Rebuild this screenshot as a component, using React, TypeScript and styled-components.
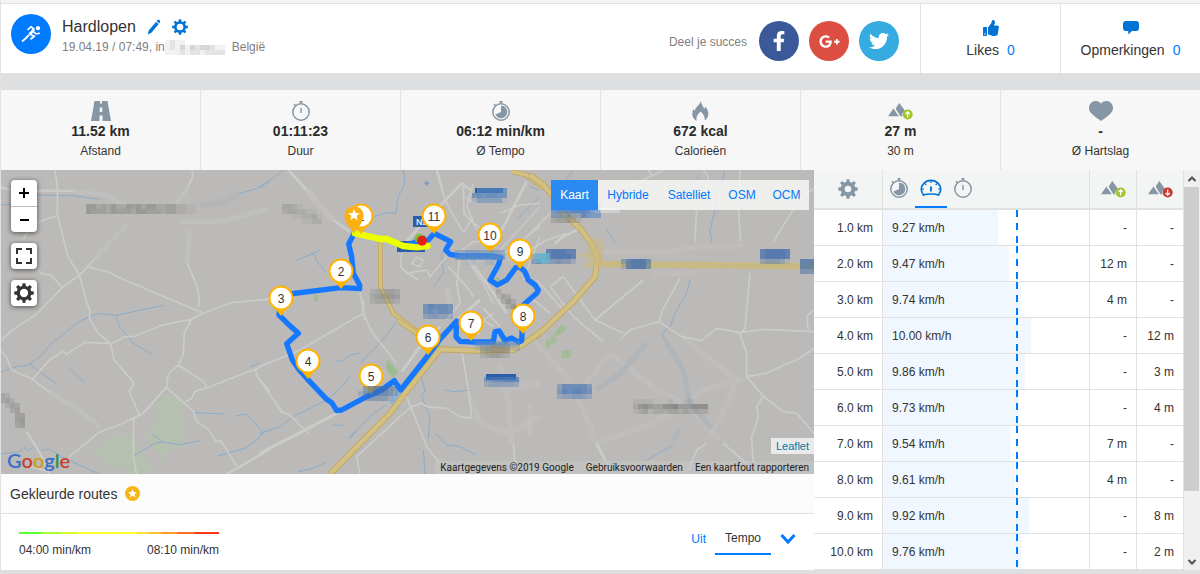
import React from "react";
import styled, { createGlobalStyle, css } from "styled-components";
import { FaFacebookF, FaGooglePlusG, FaTwitter, FaThumbsUp } from "react-icons/fa";

const c = {
  blue: "#007aff",
  link: "#0073d5",
  text: "#333",
  muted: "#808080",
  icon: "#8796a5",
  line: "#e1e1e1",
  page: "#dedfe1",
  soft: "#f3f5f4",
};

const Global = createGlobalStyle`
  *, *::before, *::after { box-sizing: border-box; }
  body {
    margin: 0;
    background: ${c.page};
    color: ${c.text};
    font: 12px/20px "Liberation Sans", Arial, sans-serif;
  }
  button { font: inherit; color: inherit; background: none; border: 0; padding: 0; cursor: pointer; }
  a { color: inherit; text-decoration: none; }
  svg { display: block; flex: none; }
`;

/* ---------- page frame ---------- */

const Page = styled.div`
  border-left: 1px solid ${c.line};
`;

const TopStrip = styled.div`
  height: 4px;
  background: ${c.soft};
  border-bottom: 1px solid ${c.line};
`;

const Header = styled.header`
  display: flex;
  min-height: 69px;
  margin-bottom: 17px;
  background: #fff;
`;

const Identity = styled.div`
  display: flex;
  flex: 1;
  gap: 11px;
  padding: 10px;
`;

const SportBadge = styled.span`
  display: flex;
  width: 40px;
  height: 40px;
  border-radius: 50%;
  background: ${c.blue};
  align-items: center;
  justify-content: center;
`;

const TitleRow = styled.div`
  display: flex;
  align-items: center;
  gap: 11px;
  height: 25px;
`;

const Title = styled.h1`
  margin: 0;
  font-size: 16px;
  font-weight: 400;
`;

const IconButton = styled.button`
  display: flex;
  color: ${c.link};
`;

const SubTitle = styled.div`
  display: flex;
  align-items: center;
  line-height: 16px;
  color: ${c.muted};
`;

const Share = styled.div`
  display: flex;
  align-items: center;
  gap: 10px;
  padding: 5px 21px 0 0;
  color: ${c.muted};
`;

const ShareLabel = styled.span`
  padding: 2px 2px 0 0;
`;

const SocialLink = styled.a<{ $bg: string }>`
  display: flex;
  width: 40px;
  height: 40px;
  border-radius: 50%;
  background: ${(p) => p.$bg};
  color: #fff;
  align-items: center;
  justify-content: center;
`;

const Reaction = styled.button`
  display: flex;
  flex-direction: column;
  align-items: center;
  gap: 3px;
  width: 140px;
  padding-top: 16px;
  border-left: 1px solid ${c.line};
  font-size: 14px;

  svg { color: ${c.link}; }
`;

const ReactionText = styled.span`
  display: flex;
  gap: 8px;
  line-height: 22px;
`;

const Count = styled.span`
  color: ${c.blue};
`;

/* ---------- summary ---------- */

const Stats = styled.section`
  display: grid;
  grid-template-columns: repeat(6, 1fr);
  margin-left: -1px;
  background: #f7f7f7;
`;

const Stat = styled.div`
  display: flex;
  flex-direction: column;
  align-items: center;
  height: 80px;
  padding-top: 11px;
  border-left: 1px solid ${c.line};
`;

const StatValue = styled.strong`
  font-size: 14px;
  color: #2b2b2b;
`;

const StatIcon = styled.span`
  height: 20px;
  color: ${c.icon};
`;

/* ---------- map ---------- */

const Main = styled.main`
  display: grid;
  grid-template-columns: minmax(0, 813fr) minmax(0, 386fr);
  background: #fff;
`;

const MapColumn = styled.section`
  display: flex;
  flex-direction: column;
`;

const MapBox = styled.div`
  position: relative;
  height: 304px;
  overflow: hidden;
  background: #bbbab8;
`;

const MapTools = styled.div`
  position: absolute;
  top: 10px;
  left: 10px;
  display: flex;
  flex-direction: column;
  gap: 11px;
`;

const ToolGroup = styled.div`
  border-radius: 4px;
  background: #fff;
  box-shadow: 0 1px 5px rgba(0, 0, 0, 0.6);
`;

const Tool = styled.button`
  display: flex;
  width: 26px;
  height: 26px;
  align-items: center;
  justify-content: center;
  color: #000;

  & + & { border-top: 1px solid #bbb; }
`;

const IconTool = styled(Tool)`
  color: #333;
`;

const LayerPicker = styled.div`
  position: absolute;
  top: 10px;
  right: 5px;
  display: grid;
  grid-template-columns: 47px 60px 62px 44px 45px;
  height: 30px;
  background: rgba(255, 255, 255, 0.75);
`;

const Layer = styled.button<{ $on?: boolean }>`
  color: ${c.blue};
  ${(p) =>
    p.$on &&
    css`
      background: rgba(0, 116, 242, 0.82);
      color: #fff;
    `}
`;

const LeafletCredit = styled.a`
  position: absolute;
  right: 0;
  bottom: 20px;
  padding: 0 5px;
  font-size: 11px;
  line-height: 16px;
  color: #0078a8;
  background: rgba(255, 255, 255, 0.7);
`;

const GoogleCredit = styled.div`
  position: absolute;
  right: 0;
  bottom: 0;
  display: flex;
  gap: 12px;
  padding: 0 5px;
  font: 400 10px/13px Roboto, sans-serif;
  color: #222;
  background: rgba(200, 200, 198, 0.5);
`;

const GoogleLogo = styled.div`
  position: absolute;
  left: 6px;
  bottom: 0;
  font: 600 20px/28px Lato, sans-serif;
`;

const Tint = styled.span<{ $c: string }>`
  color: ${(p) => p.$c};
`;

/* ---------- coloured routes ---------- */

const RoutesTitle = styled.h2`
  display: flex;
  align-items: center;
  gap: 8px;
  height: 40px;
  margin: 0;
  padding: 0 9px;
  border-bottom: 1px solid ${c.line};
  background: #fcfcfc;
  font-size: 14px;
  font-weight: 400;
`;

const RoutesBody = styled.div`
  display: flex;
  justify-content: space-between;
  align-items: flex-start;
  height: 56px;
  padding: 0 18px;
`;

const Legend = styled.div`
  width: 200px;
  padding-top: 18px;
`;

const LegendBar = styled.div`
  height: 2px;
  margin-bottom: 6px;
  background: linear-gradient(
    to right,
    #5bff33 0 11%, #a6ff33 11% 21%, #d9fa33 21% 29%, #ffff2e 29% 59%, #ffe13a 59% 65%,
    #fbc02d 65% 71%, #fb9a2b 71% 79%, #fa6f22 79% 88%, #f93a1a 88%
  );
`;

const LegendLabels = styled.div`
  display: flex;
  justify-content: space-between;
`;

const Modes = styled.div`
  display: flex;
  align-items: center;
  gap: 9px;
  padding-top: 8px;
`;

const Mode = styled.button<{ $on?: boolean }>`
  height: 33px;
  color: ${c.blue};
  ${(p) =>
    p.$on &&
    css`
      padding: 0 10px;
      color: ${c.text};
      border-bottom: 2px solid ${c.blue};
    `}
`;

const MoreModes = styled(IconButton)`
  color: ${c.blue};
`;

/* ---------- split table ---------- */

const SplitPanel = styled.section`
  display: flex;
  height: 400px;
  overflow: hidden;
`;

const SplitTable = styled.table`
  flex: 1;
  align-self: flex-start;
  table-layout: fixed;
  border-collapse: separate;
  border-spacing: 0;
`;

const HeadCell = styled.th<{ $w?: number }>`
  ${(p) => p.$w && `width: ${p.$w}px;`}
  height: 40px;
  padding: 0;
  background: ${c.soft};
  border-right: 1px solid ${c.line};
  border-bottom: 2px solid ${c.line};

  & > button, & > svg { margin: 0 auto; color: ${c.icon}; }
`;

const Tabs = styled.div`
  display: flex;
  height: 38px;
`;

const Tab = styled.button<{ $on?: boolean }>`
  display: flex;
  width: 32px;
  align-items: center;
  justify-content: center;
  border-bottom: 2px solid ${(p) => (p.$on ? c.blue : "transparent")};
  color: ${(p) => (p.$on ? c.blue : c.icon)};
`;

const Cell = styled.td`
  height: 36px;
  padding: 0 9px 0 0;
  text-align: right;
  border-right: 1px solid ${c.line};
  border-bottom: 1px solid ${c.line};
`;

const SpeedCell = styled(Cell)<{ $bar: number }>`
  padding: 0 0 0 9px;
  text-align: left;
  background:
    repeating-linear-gradient(to bottom, ${c.blue} 0 7px, transparent 7px 13px) 65% 0 / 2px 100% no-repeat,
    linear-gradient(#f0f7ff, #f0f7ff) 0 0 / ${(p) => p.$bar}% 100% no-repeat;
`;

const ScrollTrack = styled.div`
  display: flex;
  flex-direction: column;
  width: 16px;
  background: #f0f0f0;
  color: #505050;
`;

const ScrollArrow = styled.button`
  display: flex;
  height: 17px;
  align-items: center;
  justify-content: center;
`;

const ScrollLane = styled.div`
  flex: 1;
`;

const ScrollThumb = styled.div`
  height: 83%;
  margin-right: 1px;
  background: #cdcdcd;
`;

/* ---------- icons ---------- */

function Gear({ size, hole = 5 }: { size: number; hole?: number }) {
  return (
    <svg width={size} height={size} viewBox="0 0 24 24" fill="currentColor">
      <circle cx="12" cy="12" r={(8.8 + hole) / 2} fill="none" stroke="currentColor" strokeWidth={8.8 - hole} />
      {[0, 45, 90, 135, 180, 225, 270, 315].map((a) => (
        <path key={a} d="M9.7 4.5 10.3.3h3.4l.6 4.2z" transform={`rotate(${a} 12 12)`} />
      ))}
    </svg>
  );
}

function Watch({ kind }: { kind: "plain" | "filled" }) {
  return (
    <svg width="20" height="20" viewBox="0 0 20 20" fill="none" stroke="currentColor">
      <circle cx="10" cy="11" r="8.2" strokeWidth="1.5" />
      <path d="M8.5.8h3M10 1v2" strokeWidth="1.6" />
      <path d="M2.800 3.800 4.600 4.400M3.200 2.800l1.400 1.800" strokeWidth="1.2" />
      {kind === "plain" ? (
        <path d="M10 7v5" strokeWidth="1.4" />
      ) : (
        <path d="M10 4.8a6.2 6.2 0 1 1-5.6 8.8L10 11z" fill="currentColor" stroke="none" />
      )}
    </svg>
  );
}

function Speedometer() {
  return (
    <svg width="22" height="18" viewBox="0 0 22 18" fill="none" stroke={c.link} strokeWidth="1.7">
      <path
        d="M3.6 16.2C.4 12.4.7 7.6 3.6 4.6 7.6.3 14.4.3 18.4 4.6 21.3 7.6 21.6 12.4 18.4 16.2 16 14.6 6 14.6 3.6 16.2z"
        strokeLinejoin="round"
      />
      <path d="M11 7.5v5" strokeWidth="1.9" />
      <path d="M11 2v2M5 4.6 6.3 6M17 4.6 15.7 6M2 10h2M18 10h2" strokeWidth="1.2" />
    </svg>
  );
}

function Hills({ down }: { down?: boolean }) {
  return (
    <svg width="25" height="20" viewBox="0 0 25 20">
      <path d="M11.3 2 16.8 9.6 14.4 12.5 14.2 15.2H12.4L7.6 7.6z" fill={c.icon} />
      <path d="M5.4 7.4 10.8 15.2H0z" fill={c.icon} />
      <circle cx="19.7" cy="13.5" r="5" fill={down ? "#c93732" : "#a3c62c"} />
      <path
        d={down ? "M19.7 10.5V16M17.5 14l2.2 2.2 2.2-2.2" : "M19.7 16.5V11M17.5 13l2.2-2.2 2.2 2.2"}
        fill="none"
        stroke="#fff"
        strokeWidth="1.2"
      />
    </svg>
  );
}

const starPath = "M0-6 1.600-2 6-1.800 2.600 1 3.800 5.200 0 2.800-3.800 5.200-2.600 1-6-1.800-1.600-2z";

const Runner = () => (
  <svg width="20" height="18" viewBox="0 0 20 18" fill="none" stroke="#fff" strokeWidth="1.800">
    <circle cx="17" cy="3.2" r="2.1" fill="#fff" stroke="none" />
    <path d="M6.5 4.8 10 1.800 13.500 4.500M12.500 6.800l2.500 2 4-.6" strokeWidth="1.6" />
    <path d="M13 4.500 8.500 9.400" strokeWidth="2.800" />
    <path d="M8.500 9 13.200 11.300 9.500 14.200M8 10 4.500 13.500 1 16.500" />
  </svg>
);

const Pencil = () => (
  <svg width="14" height="16" viewBox="0 0 14 16" fill="currentColor">
    <path d="M10.600 1.100c1.100-1.100 3.200.4 2.500 1.800l-.9 1.300-2.600-2zM9 3l2.700 2-7.300 8.800L.8 15.500l.9-3.900z" />
  </svg>
);

const Road = () => (
  <svg width="20" height="20" viewBox="0 0 20 20" fill={c.icon}>
    <path d="M3.500 0H9v2.500h2V0h5.500L20 20h-8.500v-5.500h-3V20H0zM8.800 6.500v4.500h2.400V6.500z" fillRule="evenodd" />
  </svg>
);

const Flame = () => (
  <svg width="17" height="20" viewBox="0 0 17 20" fill={c.icon}>
    <path d="M8.8 0c.5 3.400 2.700 5.300 3.200 7.800.9-.3 1.300-1.200 1.300-2.200 3.600 4.300 4.700 10-.6 14 .5-3.300-1.100-6.600-4.200-9.200-3 2.500-4.700 6-3.900 9.500C-.3 17-.6 11.800 1.500 8c.3.900.8 1.500 1.500 1.700C3.200 5.600 8 4.200 8.800 0z" />
  </svg>
);

const Heart = () => (
  <svg width="24" height="20" viewBox="0 0 24 20" fill={c.icon}>
    <path d="M12 2.600C14.500-.8 19.500-.6 22 1.900c2.700 2.700 2.500 6.800.4 9.600C20 14.700 15.500 17.200 12 20 8.500 17.200 4 14.700 1.600 11.500-.5 8.700-.7 4.600 2 1.900 4.500-.6 9.500-.8 12 2.600z" />
  </svg>
);

const Bubble = () => (
  <svg width="16" height="16" viewBox="0 0 16 16" fill="currentColor">
    <path d="M3 1h10c2 0 3 1.200 3 3v4c0 1.900-1 3-3 3H9l-3.600 3.600L5.200 11H3c-2 0-3-1.100-3-3V4c0-1.800 1-3 3-3z" />
  </svg>
);

/* ---------- map drawing ---------- */

/* Blurred-out label: each digit is the strength of one square. */
function Mosaic({ x, y, color, rows, cell = 5 }: { x: number; y: number; color: string; rows: string[]; cell?: number }) {
  return (
    <g fill={color} shapeRendering="crispEdges">
      {rows.flatMap((row, r) =>
        row.split("").map((d, i) => (
          <rect key={`${r}-${i}`} x={x + i * cell} y={y + r * cell} width={cell} height={cell} opacity={Number(d) / 10} />
        ))
      )}
    </g>
  );
}

/* Map sheets are drawn at three units to the pixel from their own corner. */
const Sheet = ({ x, y, children }: { x: number; y: number; children: React.ReactNode }) => (
  <g transform={`translate(${x} ${y}) scale(0.33333)`}>{children}</g>
);

const Streets = ({ d, w = 5 }: { d: string; w?: number }) => <path d={d} stroke="#cbcbca" strokeWidth={w} />;
const Water = ({ d }: { d: string }) => <path d={d} stroke="#8aacca" strokeWidth={3} />;
const Highway = ({ d, w = 15 }: { d: string; w?: number }) => (
  <>
    <path d={d} stroke="#c2a55a" strokeWidth={w} />
    <path d={d} stroke="#d2c183" strokeWidth={w - 5} />
  </>
);

function Pin({ x, y, label }: { x: number; y: number; label: string }) {
  return (
    <g transform={`translate(${x} ${y})`}>
      <path d="M-8 8 0 18 8 8z" fill="#ffb400" />
      <circle r="11.500" fill="#fff" stroke="#ffb400" strokeWidth="2" />
      <text y="5" textAnchor="middle" fontSize="12" fill="#333" stroke="none">
        {label}
      </text>
    </g>
  );
}

const pins: [number, number, string][] = [
  [361, 216, "1"],
  [341, 271, "2"],
  [281, 298, "3"],
  [308, 361, "4"],
  [371, 376, "5"],
  [428, 337, "6"],
  [471, 323, "7"],
  [523, 316, "8"],
  [520, 251, "9"],
  [490, 235, "10"],
  [434, 216, "11"],
];

function MapDrawing() {
  return (
    <svg width="100%" height="100%" viewBox="1 170 813 304" preserveAspectRatio="xMidYMid slice" fill="none" strokeLinejoin="round">
      <rect x="-400" y="100" width="1700" height="450" fill="#bbbab8" />
      <Sheet x={0} y={170}>
        <path d="M500 668 548 696 542 720 551 752 545 828 498 850 500 870 488 880 432 790 455 780 475 745 460 715zM340 795 395 787 455 895 440 915 375 915 380 890 330 890 278 845z" fill="#b5c0b1" />
        <Water d="M0 105 60 103M110 75 220 77 300 88M0 606 50 590 85 586 120 560 160 514 180 502 232 457 268 440 300 430 347 436 492 406M347 436 358 470 400 520 460 555M88 582 170 642M205 590 255 640M583 728 670 732M708 738 740 732 790 788 770 810 735 835 652 858M810 780 790 788M398 860 465 820 490 816 540 824 602 812M490 816 455 792M0 852 60 845 70 832 85 842 100 832 115 842 150 838 180 858 297 912M750 590 778 580M810 30 770 55 720 70" />
        <Streets d="M165 0 172 50 172 135 204 260 238 315 258 390 271 425 268 445 295 490 332 522 341 568 400 636 400 645 387 663 418 735 401 745 400 860 410 915M172 137 125 152 90 170 70 210M115 300 125 312 150 314 188 352M285 265 240 315 190 350 110 432 35 482 0 515M268 291 330 308 355 322 610 430 693 398 810 387M610 430 575 447 482 467 405 499 375 500 334 521 255 517 200 553 188 545 150 568 97 628M575 447 553 488 550 552 535 585 505 612 499 652 440 718 420 735 350 768 300 785 205 862M535 585 610 634 621 653M810 575 765 598 621 653 585 664 575 685 556 696M499 652 580 724 590 755 625 778 648 815 662 812 710 888M575 0 580 15 565 50M562 280 592 350 598 392 594 412M765 598 775 625 810 665M0 540 18 560 35 600 97 628 150 668" />
        <Streets d="M0 52 30 58M110 62 220 63M80 785 120 850 150 915M675 915 810 838M90 890 150 905" w={7} />
        <g opacity="0.300">
          <Streets d="M220 63 320 75 380 110M380 165 285 265M150 668 230 715 300 770M570 180 560 280M540 155 660 155 810 115M565 50 530 100" w={14} />
          <path d="M720 70 660 100 600 105" stroke="#a3abb5" strokeWidth="20" />
        </g>
      </Sheet>
      <Sheet x={260} y={170}>
        <Water d="M70 0 0 55M430 0 435 40 415 80 408 130 380 128 340 140M110 270 160 250 175 280 200 310M160 250 180 240M570 210 545 250 550 310 520 350M840 80 770 150" />
        <path d="M500 32 508 40 500 48 492 40z" fill="#7f9fc4" />
        <Streets d="M530 0 555 90 585 145 610 185M610 40 612 130 635 155 700 200M640 40 620 110 650 180M840 100 780 105 720 130M425 250 422 290 440 310 500 300 510 320 560 260M430 300 475 330M455 280 470 262 490 270 480 290 455 280M600 262 590 340 600 400 560 450M565 290 620 350 640 380M300 365 310 420 315 450M0 390 60 387M700 215 640 215 600 245M840 170 800 200 730 250" />
        <Streets d="M85 0 140 60M220 150 270 185M530 0 545 50M630 60 605 40 470 180 430 225M800 35 715 200M610 245 680 340 740 430" w={8} />
        <Streets d="M840 110 720 240M620 262 660 330M640 140 610 190M610 80 650 100M630 260 700 400M840 200 790 330" w={4} />
        <g opacity="0.400">
          <Streets d="M140 60 170 95 220 150M560 350 570 400M640 265 840 265" w={18} />
        </g>
        <path d="M712 320 725 332 715 345 700 332zM165 375 175 375 172 395 162 390z" fill="#9dbb90" />
        <Highway d="M755 5 800 15 850 55" />
        <Highway d="M361 215 361 350 400 430 480 490" w={14} />
      </Sheet>
      <Sheet x={260} y={300}>
        <Water d="M0 400 60 380 100 350 140 330 200 300 235 270 275 225M225 185 250 180 270 165 300 160M300 190 340 150 375 110 410 65M220 375 255 376M290 390 265 415M485 235 495 270 485 290 510 350 505 415M525 400 560 435 600 440 645 463M555 270 580 275 630 270M115 515 160 505 200 485M270 415 320 360 340 340 380 315M490 450 495 522" />
        <Streets d="M0 200 120 150 310 40M310 0 310 40 335 95 410 190M0 240 65 335 90 345 130 385 150 405M455 318 290 470 300 522M440 290 500 440 540 490M455 320 485 310 500 320 560 325 600 350 635 355M605 150 630 300 635 355M760 430 765 490M640 80 700 40M655 105 670 60 700 80M670 25 720 80" />
        <Streets d="M0 460 240 335M425 215 480 140 540 80M590 60 660 0" w={9} />
        <g opacity="0.250">
          <Streets d="M630 290 660 370 750 400 840 350M720 190 745 300 755 430M840 250 720 270" w={18} />
        </g>
        <path d="M382 178 415 215 400 235 378 205z" fill="#9dbb90" />
        <path d="M420 275 395 312" stroke="#8fb2d0" strokeWidth="18" />
        <Highway d="M415 62 470 100 540 146" />
        <Highway d="M210 522 390 340 435 280 540 148 640 152 760 150 840 100" w={18} />
      </Sheet>
      <Sheet x={530} y={170}>
        <Water d="M585 0 575 40 555 60 558 110 540 180 545 215M480 330 470 370 440 420 420 470 395 490 405 510M230 180 255 215M0 50 25 60M130 0 100 40M495 20 505 28M430 825 350 870" />
        <Streets d="M400 0 300 50M355 0 365 15M520 0 535 20 525 60M500 120 495 215M630 0 625 115 632 215M850 55 805 95 730 215M450 325 395 425 388 455M340 330 195 450M660 310 645 475 630 492 650 550 650 620M388 455 360 462 300 480 270 510M388 455 455 500 515 512 560 475 630 488 700 478 860 485M100 320 60 350M100 320 195 450 280 490M60 350 130 440 220 515M860 530 800 570 750 590 710 610 650 620 700 678 760 725 800 730 860 800M700 678 680 710 685 740 665 800 670 890M850 420 830 440 835 480M0 190 60 130 150 90M0 240 50 210 110 190M0 380 60 430M20 330 100 420M200 820 240 900M530 820 500 840 475 900M580 820 650 880" />
        <Streets d="M75 220 100 200 150 175M200 820 225 870" w={8} />
        <g opacity="0.250">
          <Streets d="M0 500 110 620 160 720 200 820 330 775 440 720 520 660 640 625M240 550 380 660 480 710 570 810M455 500 620 630 590 700 540 800M160 650 240 550M0 700 0 800M220 245 420 245 500 230 640 230M370 310 500 310" w={16} />
          <path d="M350 520 270 610 200 660M405 510 460 600 480 700 545 775M450 780 430 810" stroke="#8fa8c0" strokeWidth="15" />
        </g>
        <path d="M95 462 110 480 80 500 72 490zM68 493 82 512 72 524 58 508zM48 508 64 514 60 535 46 535zM95 540 122 540 122 565 95 565z" fill="#9dbb90" opacity="0.800" />
        <Highway d="M0 15 40 45 70 80 100 130 150 175 185 220 203 265 195 320 130 395 40 480-30 530" w={18} />
        <path d="M203 282 860 289" stroke="#cbb97c" strokeWidth="20" opacity="0.900" />
      </Sheet>
      <g shapeRendering="crispEdges" fill="#2a5ea8">
        <rect x="413" y="216" width="22" height="11" />
        <rect x="397" y="241" width="28" height="11" />
        <rect x="475" y="188" width="28" height="5" />
        <rect x="486" y="374" width="30" height="6" />
      </g>
      <text x="416" y="225" fontSize="9" fontWeight="bold" fill="#dfe6ef">N2</text>

      <Sheet x={260} y={170}>
        <path
          d="M440 228 490 205M283 190 266 222 275 260 280 310 299 345 299 356 243 353 63 375 57 435 80 458 115 490 80 521 97 570 118 600 143 628 200 688 215 698 230 722 245 720 310 685 365 660 403 632 422 660 505 555 542 505 590 453 588 500 600 514 640 516 700 516 705 485 718 483 735 512 755 504 775 516 785 512 790 405 830 370 835 360 825 345 805 330 795 305 780 292 768 292 740 330 712 345 690 330 715 285 722 262 690 258 600 258 570 253 557 240 572 215 523 190 505 210"
          stroke="#1677ff"
          strokeWidth="16"
          strokeLinecap="round"
        />
        <path d="M285 190 330 200 361 207 380 207 430 228 470 232 503 228" stroke="#ecff00" strokeWidth="19" strokeLinecap="round" />
        <circle cx="478" cy="205" r="14" fill="#7ac231" />
        <circle cx="486" cy="212" r="15" fill="#e2211c" />
      </Sheet>

      {pins.map(([x, y, label]) => (
        <Pin key={label} x={x} y={y} label={label} />
      ))}
      <path d="M354 234c-1-5-9.500-9.500-9.500-18.500a9.500 9.500 0 0 1 19 0c0 9-8.500 13.500-9.500 18.500z" fill="#fab010" />
      <path d={starPath} fill="#fff" transform="translate(354 215)" />

      <Mosaic x={86} y={204} color="#777" rows={["5534353354535533442211", "5444354443554443442211"]} />
      <Mosaic x={282} y={204} color="#777" rows={["332100000", "233221100", "001122310", "000011220"]} />
      <Mosaic x={370} y={289} color="#777" rows={["233443", "345554", "233332"]} />
      <Mosaic x={472} y={188} color="#5684bd" rows={["0777777", "7878877", "2555551"]} />
      <Mosaic x={423} y={304} color="#4a78b5" rows={["687776", "676776", "455443"]} />
      <Mosaic x={455} y={250} color="#5f8cc0" rows={["4566655654", "6878787886", "0012002200"]} />
      <Mosaic x={531} y={249} color="#3f6cab" rows={["000788877", "333788887", "463445442"]} />
      <Mosaic x={535} y={253} color="#5fb6d3" rows={["677", "788"]} />
      <Mosaic x={621} y={259} color="#3f6cab" rows={["478886", "278885"]} />
      <Mosaic x={755} y={249} color="#3f6cab" rows={["0788887", "0788887", "0344431"]} />
      <Mosaic x={800} y={259} color="#3f6cab" rows={["7778", "7778", "5556"]} />
      <Mosaic x={551} y={203} color="#3f7cc8" rows={["000000045400", "677788877700", "444423765500"]} />
      <Mosaic x={551} y={213} color="#777" rows={["23343120000", "34454200000"]} />
      <Mosaic x={575} y={203} color="#d7dbe0" rows={["000000000", "000247776"]} />
      <Mosaic x={578} y={238} color="#cbb97c" rows={["00343", "00565", "00586", "45686", "00575", "04650"]} />
      <Mosaic x={358} y={386} color="#3f6cab" rows={["04677754", "25676653", "03444420"]} />
      <Mosaic x={480} y={343} color="#777" rows={["346664", "456665", "234432"]} />
      <Mosaic x={470} y={341} color="#5f8cc0" rows={["0555556665", "0223000223"]} />
      <Mosaic x={484} y={377} color="#4a78b5" rows={["5677887", "3444443"]} />
      <Mosaic x={557} y={384} color="#4a78b5" rows={["4777775", "5878876", "3445543"]} />
      <Mosaic x={633} y={399} color="#666" rows={["111100010011000", "245433556444555", "123122233232222"]} />
      <Mosaic x={0} y={393} color="#777" rows={["32000", "34200", "02430", "00340", "00044", "00045", "00034"]} />
      <Mosaic x={496} y={289} color="#666" rows={["2000", "1320", "0242", "0024"]} />
    </svg>
  );
}

/* ---------- data ---------- */

const stats = [
  { icon: <Road />, value: "11.52 km", label: "Afstand" },
  { icon: <Watch kind="plain" />, value: "01:11:23", label: "Duur" },
  { icon: <Watch kind="filled" />, value: "06:12 min/km", label: "Ø Tempo" },
  { icon: <Flame />, value: "672 kcal", label: "Calorieën" },
  { icon: <Hills />, value: "27 m", label: "30 m" },
  { icon: <Heart />, value: "-", label: "Ø Hartslag" },
];

const splits = [
  { km: "1.0 km", speed: "9.27 km/h", bar: 56, up: "-", down: "-" },
  { km: "2.0 km", speed: "9.47 km/h", bar: 61, up: "12 m", down: "-" },
  { km: "3.0 km", speed: "9.74 km/h", bar: 67, up: "4 m", down: "-" },
  { km: "4.0 km", speed: "10.00 km/h", bar: 72, up: "-", down: "12 m" },
  { km: "5.0 km", speed: "9.86 km/h", bar: 69, up: "-", down: "3 m" },
  { km: "6.0 km", speed: "9.73 km/h", bar: 66, up: "-", down: "4 m" },
  { km: "7.0 km", speed: "9.54 km/h", bar: 62, up: "7 m", down: "-" },
  { km: "8.0 km", speed: "9.61 km/h", bar: 64, up: "4 m", down: "-" },
  { km: "9.0 km", speed: "9.92 km/h", bar: 71, up: "-", down: "8 m" },
  { km: "10.0 km", speed: "9.76 km/h", bar: 67, up: "-", down: "2 m" },
];

export default function App() {
  return (
    <Page>
      <Global />
      <TopStrip />
      <Header>
        <Identity>
          <SportBadge>
            <Runner />
          </SportBadge>
          <div>
            <TitleRow>
              <Title>Hardlopen</Title>
              <IconButton aria-label="Bewerken">
                <Pencil />
              </IconButton>
              <IconButton aria-label="Instellingen">
                <Gear size={16} />
              </IconButton>
            </TitleRow>
            <SubTitle>
              <span>19.04.19 / 07:49, in</span>
              <svg width="67" height="15" viewBox="0 0 67 15">
                <Mosaic x={0} y={0} color="#777" rows={["1211000000000", "1213132332110", "1112122122220"]} />
              </svg>
              <span>België</span>
            </SubTitle>
          </div>
        </Identity>
        <Share>
          <ShareLabel>Deel je succes</ShareLabel>
          <SocialLink href="#facebook" aria-label="Facebook" $bg="#3b5998">
            <FaFacebookF size={20} />
          </SocialLink>
          <SocialLink href="#google" aria-label="Google Plus" $bg="#dc4e41">
            <FaGooglePlusG size={21} />
          </SocialLink>
          <SocialLink href="#twitter" aria-label="Twitter" $bg="#35abe1">
            <FaTwitter size={20} />
          </SocialLink>
        </Share>
        <Reaction>
          <FaThumbsUp size={16} />
          <ReactionText>
            Likes <Count>0</Count>
          </ReactionText>
        </Reaction>
        <Reaction>
          <Bubble />
          <ReactionText>
            Opmerkingen <Count>0</Count>
          </ReactionText>
        </Reaction>
      </Header>

      <Stats>
        {stats.map((s) => (
          <Stat key={s.label}>
            <StatIcon>{s.icon}</StatIcon>
            <StatValue>{s.value}</StatValue>
            <span>{s.label}</span>
          </Stat>
        ))}
      </Stats>

      <Main>
        <MapColumn>
          <MapBox>
            <MapDrawing />
            <MapTools>
              <ToolGroup>
                <Tool aria-label="Inzoomen">
                  <svg width="12" height="12" viewBox="0 0 12 12" stroke="currentColor" strokeWidth="2">
                    <path d="M6 1v10M1 6h10" />
                  </svg>
                </Tool>
                <Tool aria-label="Uitzoomen">
                  <svg width="12" height="12" viewBox="0 0 12 12" stroke="currentColor" strokeWidth="2">
                    <path d="M2 6h9" />
                  </svg>
                </Tool>
              </ToolGroup>
              <ToolGroup>
                <IconTool aria-label="Volledig scherm">
                  <svg width="16" height="16" viewBox="0 0 16 16" fill="none" stroke="currentColor" strokeWidth="2">
                    <path d="M1 6V1h5M10 1h5v5M15 10v5h-5M6 15H1v-5" />
                  </svg>
                </IconTool>
              </ToolGroup>
              <ToolGroup>
                <IconTool aria-label="Kaartinstellingen">
                  <Gear size={20} />
                </IconTool>
              </ToolGroup>
            </MapTools>
            <LayerPicker>
              <Layer $on>Kaart</Layer>
              <Layer>Hybride</Layer>
              <Layer>Satelliet</Layer>
              <Layer>OSM</Layer>
              <Layer>OCM</Layer>
            </LayerPicker>
            <GoogleLogo>
              <Tint $c="#3a6fc9">G</Tint>
              <Tint $c="#c8412f">o</Tint>
              <Tint $c="#cf9f14">o</Tint>
              <Tint $c="#3a6fc9">g</Tint>
              <Tint $c="#2f9150">l</Tint>
              <Tint $c="#c8412f">e</Tint>
            </GoogleLogo>
            <LeafletCredit href="#leaflet">Leaflet</LeafletCredit>
            <GoogleCredit>
              <span>Kaartgegevens ©2019 Google</span>
              <a href="#voorwaarden">Gebruiksvoorwaarden</a>
              <a href="#kaartfout">Een kaartfout rapporteren</a>
            </GoogleCredit>
          </MapBox>
          <RoutesTitle>
            Gekleurde routes
            <svg width="15" height="15" viewBox="-8 -8 16 16">
              <circle r="8" fill="#f9b50f" />
              <path d={starPath} fill="#fff" transform="scale(0.8)" />
            </svg>
          </RoutesTitle>
          <RoutesBody>
            <Legend>
              <LegendBar />
              <LegendLabels>
                <span>04:00 min/km</span>
                <span>08:10 min/km</span>
              </LegendLabels>
            </Legend>
            <Modes>
              <Mode>Uit</Mode>
              <Mode $on>Tempo</Mode>
              <MoreModes aria-label="Meer">
                <svg width="16" height="12" viewBox="0 0 16 12" fill="none" stroke="currentColor" strokeWidth="3">
                  <path d="M1.500 2 8 9l6.500-7" />
                </svg>
              </MoreModes>
            </Modes>
          </RoutesBody>
        </MapColumn>

        <SplitPanel>
          <SplitTable>
            <thead>
              <tr>
                <HeadCell $w={69}>
                  <IconButton aria-label="Tabelinstellingen">
                    <Gear size={20} hole={4} />
                  </IconButton>
                </HeadCell>
                <HeadCell>
                  <Tabs>
                    <Tab aria-label="Tempo">
                      <Watch kind="filled" />
                    </Tab>
                    <Tab aria-label="Snelheid" $on>
                      <Speedometer />
                    </Tab>
                    <Tab aria-label="Duur">
                      <Watch kind="plain" />
                    </Tab>
                  </Tabs>
                </HeadCell>
                <HeadCell $w={47}>
                  <Hills />
                </HeadCell>
                <HeadCell $w={47}>
                  <Hills down />
                </HeadCell>
              </tr>
            </thead>
            <tbody>
              {splits.map((s) => (
                <tr key={s.km}>
                  <Cell>{s.km}</Cell>
                  <SpeedCell $bar={s.bar}>{s.speed}</SpeedCell>
                  <Cell>{s.up}</Cell>
                  <Cell>{s.down}</Cell>
                </tr>
              ))}
            </tbody>
          </SplitTable>
          <ScrollTrack>
            <ScrollArrow aria-label="Omhoog">
              <svg width="10" height="8" viewBox="0 0 10 8" fill="none" stroke="currentColor" strokeWidth="2">
                <path d="M1.500 6 5 2.500 8.500 6" />
              </svg>
            </ScrollArrow>
            <ScrollLane>
              <ScrollThumb />
            </ScrollLane>
            <ScrollArrow aria-label="Omlaag">
              <svg width="10" height="8" viewBox="0 0 10 8" fill="none" stroke="currentColor" strokeWidth="2">
                <path d="M1.500 2 5 5.500 8.500 2" />
              </svg>
            </ScrollArrow>
          </ScrollTrack>
        </SplitPanel>
      </Main>
    </Page>
  );
}
